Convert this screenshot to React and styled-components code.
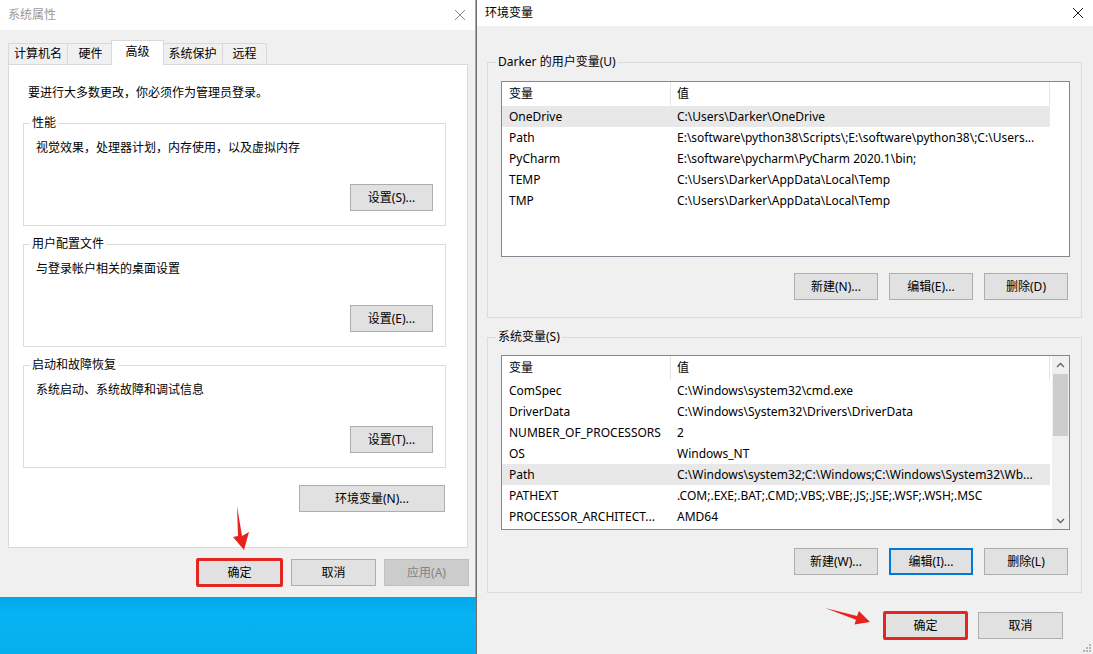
import React from "react";
import styled, { createGlobalStyle, css } from "styled-components";

const userVars = [
  { name: "OneDrive", value: "C:\\Users\\Darker\\OneDrive", selected: true },
  { name: "Path", value: "E:\\software\\python38\\Scripts\\;E:\\software\\python38\\;C:\\Users..." },
  { name: "PyCharm", value: "E:\\software\\pycharm\\PyCharm 2020.1\\bin;" },
  { name: "TEMP", value: "C:\\Users\\Darker\\AppData\\Local\\Temp" },
  { name: "TMP", value: "C:\\Users\\Darker\\AppData\\Local\\Temp" },
];

const systemVars = [
  { name: "ComSpec", value: "C:\\Windows\\system32\\cmd.exe" },
  { name: "DriverData", value: "C:\\Windows\\System32\\Drivers\\DriverData" },
  { name: "NUMBER_OF_PROCESSORS", value: "2" },
  { name: "OS", value: "Windows_NT" },
  { name: "Path", value: "C:\\Windows\\system32;C:\\Windows;C:\\Windows\\System32\\Wb...", selected: true },
  { name: "PATHEXT", value: ".COM;.EXE;.BAT;.CMD;.VBS;.VBE;.JS;.JSE;.WSF;.WSH;.MSC" },
  { name: "PROCESSOR_ARCHITECT...", value: "AMD64" },
];

const tabs = [
  { id: "0", title: "计算机名", width: 60 },
  { id: "1", title: "硬件", width: 47 },
  { id: "2", title: "高级", width: 53, active: true },
  { id: "3", title: "系统保护", width: 61 },
  { id: "4", title: "远程", width: 45 },
];

const groups = [
  { id: "g0", title: "性能", desc: "视觉效果，处理器计划，内存使用，以及虚拟内存", button: "设置(S)..." },
  { id: "g1", title: "用户配置文件", desc: "与登录帐户相关的桌面设置", button: "设置(E)..." },
  { id: "g2", title: "启动和故障恢复", desc: "系统启动、系统故障和调试信息", button: "设置(T)..." },
];

function CloseIcon({ color }) {
  return (
    <svg width="12" height="12" viewBox="0 0 12 12">
      <path d="M1 1 L11 11 M11 1 L1 11" stroke={color} strokeWidth="1" fill="none" />
    </svg>
  );
}

function Chevron({ up }) {
  return (
    <svg width="9" height="6" viewBox="0 0 9 6">
      <path d={up ? "M1 5 L4.5 1.5 L8 5" : "M1 1 L4.5 4.5 L8 1"} stroke="#606060" strokeWidth="1.3" fill="none" />
    </svg>
  );
}

function VarList({ rows, scroll, height }) {
  return (
    <ListBox height={height}>
      <Table>
        <HeaderRow>
          <HeadCell first>变量</HeadCell>
          <HeadCell>值</HeadCell>
        </HeaderRow>
        {rows.map((row) => (
          <Row key={row.name + row.value} selected={row.selected}>
            <NameCell>{row.name}</NameCell>
            <ValueCell>{row.value}</ValueCell>
          </Row>
        ))}
      </Table>
      {scroll && (
        <ScrollBar>
          <ScrollArrow>
            <Chevron up />
          </ScrollArrow>
          <Track>
            <Thumb />
          </Track>
          <ScrollArrow>
            <Chevron />
          </ScrollArrow>
        </ScrollBar>
      )}
    </ListBox>
  );
}

export default function App() {
  return (
    <>
      <GlobalStyle />
      <Screen>
        <LeftColumn>
          <LeftWindow>
            <TitleBar height={30}>
              <Title inactive>系统属性</Title>
              <CloseIcon color="#8c8c8c" />
            </TitleBar>
            <LeftBody>
              <TabRow>
                {tabs.map((tab) => (
                  <Tab key={tab.id} active={tab.active} width={tab.width}>
                    {tab.title}
                  </Tab>
                ))}
              </TabRow>
              <TabPanel>
                <Notice>要进行大多数更改，你必须作为管理员登录。</Notice>
                {groups.map((g, i) => (
                  <Group key={g.id} top={i === 0 ? 14 : 10}>
                    <Legend indent={6}>{g.title}</Legend>
                    <GroupContent>
                      <Desc>{g.desc}</Desc>
                      <ButtonRow top={28}>
                        <Button width={83}>{g.button}</Button>
                      </ButtonRow>
                    </GroupContent>
                  </Group>
                ))}
                <ButtonRow top={17} right={1}>
                  <Button width={146}>环境变量(N)...</Button>
                </ButtonRow>
              </TabPanel>
              <ButtonRow top={11} right={-1} gap={8}>
                <Button width={87} marked>确定</Button>
                <Button width={85}>取消</Button>
                <Button width={85} disabled>应用(A)</Button>
              </ButtonRow>
            </LeftBody>
          </LeftWindow>
          <Desktop />
        </LeftColumn>

        <RightWindow>
          <TitleBar height={26}>
            <Title>环境变量</Title>
            <CloseIcon color="#1a1a1a" />
          </TitleBar>
          <RightBody>
            <Group top={0} bottom={17}>
              <Legend indent={8}>Darker 的用户变量(U)</Legend>
              <ListContent pad={11}>
                <VarList rows={userVars} height={176} />
                <ButtonRow top={16} right={2} gap={11}>
                  <Button width={84}>新建(N)...</Button>
                  <Button width={84}>编辑(E)...</Button>
                  <Button width={84}>删除(D)</Button>
                </ButtonRow>
              </ListContent>
            </Group>
            <Group top={11} bottom={17}>
              <Legend indent={8}>系统变量(S)</Legend>
              <ListContent pad={10}>
                <VarList rows={systemVars} height={175} scroll />
                <ButtonRow top={18} right={2} gap={11}>
                  <Button width={84}>新建(W)...</Button>
                  <Button width={84} focused>编辑(I)...</Button>
                  <Button width={84}>删除(L)</Button>
                </ButtonRow>
              </ListContent>
            </Group>
            <ButtonRow top={19} right={19} gap={10}>
              <Button width={85} marked>确定</Button>
              <Button width={85}>取消</Button>
            </ButtonRow>
          </RightBody>
          <Grip>
            <svg width="10" height="10" viewBox="0 0 10 10">
              <g fill="#b5b5b5">
                <rect x="8" y="2" width="2" height="2" />
                <rect x="5" y="5" width="2" height="2" />
                <rect x="8" y="5" width="2" height="2" />
                <rect x="2" y="8" width="2" height="2" />
                <rect x="5" y="8" width="2" height="2" />
                <rect x="8" y="8" width="2" height="2" />
              </g>
            </svg>
          </Grip>
        </RightWindow>

        <ArrowDown width="26" height="48" viewBox="0 0 26 48">
          <polygon points="9,2 14,32 21,28 16,46 5,33 10,32" fill="#e8231b" />
        </ArrowDown>
        <ArrowRight width="52" height="24" viewBox="0 0 52 24">
          <polygon points="3,4 35,12 37,7 48,18 32.5,20.5 34,15.7" fill="#e8231b" />
        </ArrowRight>
      </Screen>
    </>
  );
}

const GlobalStyle = createGlobalStyle`
  html, body {
    margin: 0;
    padding: 0;
  }
  body {
    width: 1093px;
    height: 654px;
    overflow: hidden;
    background: #04b0ef;
    font-family: "Noto Sans", "Noto Sans CJK SC", sans-serif;
    font-size: 12px;
    line-height: 16px;
    color: #000;
  }
  * {
    box-sizing: border-box;
  }
`;

const Screen = styled.div`
  position: relative;
  display: flex;
  width: 1093px;
  height: 654px;
`;

const LeftColumn = styled.div`
  display: flex;
  flex-direction: column;
  width: 476px;
  flex-shrink: 0;
`;

const LeftWindow = styled.div`
  height: 597px;
  background: #f0f0f0;
  border-right: 1px solid #a8a8a8;
  box-shadow: 0 2px 3px rgba(0, 0, 0, 0.25);
`;

const Desktop = styled.div`
  flex: 1;
  background: linear-gradient(180deg, #00a9ea 0%, #07b3f2 30%, #06aeee 100%);
`;

const TitleBar = styled.div`
  display: flex;
  align-items: center;
  justify-content: space-between;
  height: ${({ height }) => height}px;
  padding: 0 9px 0 8px;
  background: #fff;

  svg {
    flex-shrink: 0;
  }
`;

const Title = styled.span`
  color: ${({ inactive }) => (inactive ? "#9a9a9a" : "#000")};
`;

const LeftBody = styled.div`
  padding: 10px 7px 0 8px;
`;

const TabRow = styled.div`
  display: flex;
  align-items: flex-end;
  height: 24px;
`;

const Tab = styled.div`
  display: flex;
  align-items: center;
  justify-content: center;
  width: ${({ width }) => width}px;
  height: 21px;
  background: #f0f0f0;
  border: 1px solid #d9d9d9;
  border-bottom: none;
  margin-right: -1px;

  ${({ active }) =>
    active &&
    css`
      position: relative;
      z-index: 1;
      height: 25px;
      margin: 0 -2px -1px;
      padding-bottom: 3px;
      background: #fff;
    `}
`;

const TabPanel = styled.div`
  height: 484px;
  padding: 20px 21px 0 14px;
  background: #fff;
  border: 1px solid #d9d9d9;
`;

const Notice = styled.div`
  margin-left: 5px;
`;

const Group = styled.fieldset`
  margin: ${({ top }) => top}px 0 0;
  padding: 0 0 ${({ bottom }) => bottom || 14}px;
  min-width: 0;
  border: 1px solid #dcdcdc;
`;

const Legend = styled.legend`
  margin-left: ${({ indent }) => indent}px;
  padding: 0 2px;
  line-height: 16px;
`;

const GroupContent = styled.div`
  padding: 9px 12px 0;
`;

const Desc = styled.div``;

const ButtonRow = styled.div`
  display: flex;
  justify-content: flex-end;
  gap: ${({ gap }) => gap || 0}px;
  margin-top: ${({ top }) => top}px;
  margin-right: ${({ right }) => right || 0}px;
`;

const Button = styled.div`
  display: flex;
  align-items: center;
  justify-content: center;
  width: ${({ width }) => width}px;
  height: 27px;
  background: #e1e1e1;
  border: 1px solid #adadad;
  color: #000;

  ${({ disabled }) =>
    disabled &&
    css`
      background: #cccccc;
      border-color: #bfbfbf;
      color: #838383;
    `}

  ${({ focused }) =>
    focused &&
    css`
      border: 2px solid #0078d7;
    `}

  ${({ marked }) =>
    marked &&
    css`
      height: 29px;
      margin: -1px 0;
      border: 3px solid #e3261f;
      border-radius: 2px;
    `}
`;

const RightWindow = styled.div`
  position: relative;
  flex: 1;
  display: flex;
  flex-direction: column;
  background: #f0f0f0;
  border-left: 1px solid #6e6e6e;
`;

const RightBody = styled.div`
  padding: 28px 11px 0 10px;
`;

const ListContent = styled.div`
  padding: ${({ pad }) => pad}px 11px 0 13px;
`;

const ListBox = styled.div`
  display: flex;
  height: ${({ height }) => height}px;
  background: #fff;
  border: 1px solid #828790;
`;

const Table = styled.div`
  width: 548px;
  flex-shrink: 0;
`;

const columns = css`
  display: grid;
  grid-template-columns: 169px 379px;
  align-items: center;
`;

const HeaderRow = styled.div`
  ${columns};
  height: 24px;
`;

const HeadCell = styled.div`
  height: 100%;
  display: flex;
  align-items: center;
  padding-left: ${({ first }) => (first ? 7 : 6)}px;
  border-right: 1px solid #e5e5e5;
`;

const Row = styled.div`
  ${columns};
  height: 21px;
  background: ${({ selected }) => (selected ? "#e8e8e8" : "transparent")};
`;

const NameCell = styled.div`
  padding-left: 7px;
  white-space: nowrap;
  overflow: hidden;
`;

const ValueCell = styled.div`
  padding-left: 6px;
  white-space: nowrap;
  overflow: hidden;
`;

const ScrollBar = styled.div`
  display: flex;
  flex-direction: column;
  width: 17px;
  margin-left: auto;
  background: #f0f0f0;
`;

const ScrollArrow = styled.div`
  display: flex;
  align-items: center;
  justify-content: center;
  height: 17px;
`;

const Track = styled.div`
  flex: 1;
  padding: 1px 1px 0;
`;

const Thumb = styled.div`
  height: 62px;
  background: #cdcdcd;
`;

const Grip = styled.div`
  position: absolute;
  right: 2px;
  bottom: 2px;
  display: flex;
`;

const ArrowDown = styled.svg`
  position: absolute;
  left: 228px;
  top: 504px;
`;

const ArrowRight = styled.svg`
  position: absolute;
  left: 822px;
  top: 604px;
`;
